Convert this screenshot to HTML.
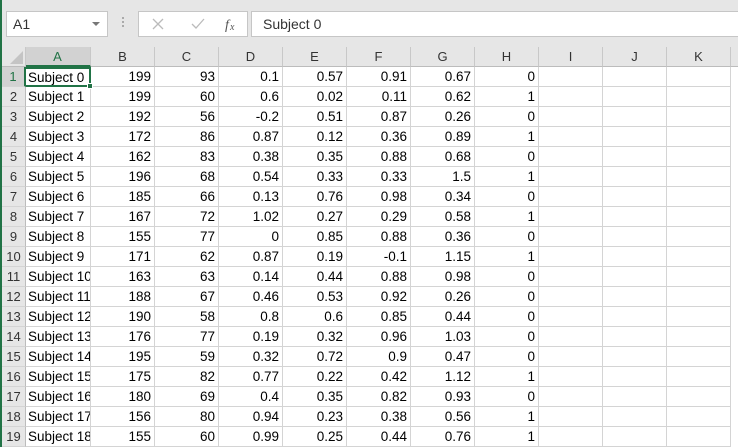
<!DOCTYPE html>
<html><head><meta charset="utf-8"><style>
*{margin:0;padding:0;box-sizing:border-box}
body{width:738px;height:447px;overflow:hidden;background:#fff;font-family:"Liberation Sans",Arial,sans-serif;position:relative}
.top{position:absolute;left:0;top:0;width:738px;height:47px;background:#e6e6e6;border-left:2px solid #217346}
.box{position:absolute;background:#fff;border:1px solid #c6c6c6;top:11px;height:26px}
.grid{position:absolute;left:0;top:47px;border-left:2px solid #217346}
.r{display:flex;height:20px}
.c{height:20px;border-right:1px solid #d4d4d4;border-bottom:1px solid #d4d4d4;font-size:13.5px;line-height:20px;white-space:nowrap;overflow:hidden;padding:0 3px;text-align:right;color:#000;flex:none;width:64px}
.c.a{width:65px;text-align:left;padding-left:2px}
.c.h{width:24px;background:#e6e6e6;color:#333;text-align:center;padding:0;border-right:1px solid #bcbcbc;border-bottom:1px solid #d4d4d4;font-size:13px}
.hd .c{background:#e6e6e6;text-align:center;color:#333;font-size:13px;border-right:1px solid #c8c8c8;border-bottom:1px solid #bcbcbc}
.hd .sel{background:#d2d2d2;color:#217346;border-bottom:2px solid #217346}
.c.hs{background:#d2d2d2;color:#217346;border-right:2px solid #217346}
</style></head><body>
<div class="top">
<div class="box" style="left:4px;width:102px"><span style="position:absolute;left:6px;top:4px;font-size:14px;color:#333">A1</span><span style="position:absolute;right:7px;top:10px;border:4px solid transparent;border-top:4px solid #777"></span></div>
<div style="position:absolute;left:120px;top:17px;width:2px;height:2px;background:#aaa;box-shadow:0 4px #aaa,0 8px #aaa"></div>
<div class="box" style="left:136px;width:110px">
<svg width="110" height="24" style="position:absolute;left:0;top:0"><path d="M14 7l10 10M24 7L14 17" stroke="#bbb" stroke-width="1.3" fill="none"/><path d="M53 12l4 4 8-9" stroke="#bbb" stroke-width="1.3" fill="none"/><text x="86" y="17" font-family="Liberation Serif" font-style="italic" font-size="14" fill="#555">f</text><text x="91" y="18" font-family="Liberation Serif" font-style="italic" font-size="10" fill="#555">x</text></svg></div>
<div class="box" style="left:249px;width:492px"><span style="position:absolute;left:11px;top:4px;font-size:14px;color:#333">Subject 0</span></div>
</div>
<div class="grid">
<div class="r hd"><div class="c h" style="position:relative"><svg width="24" height="20" style="position:absolute;left:0;top:0"><path d="M21 4V17H8z" fill="#c4c4c4"/></svg></div><div class="c a sel" style="text-align:center">A</div><div class="c">B</div><div class="c">C</div><div class="c">D</div><div class="c">E</div><div class="c">F</div><div class="c">G</div><div class="c">H</div><div class="c">I</div><div class="c">J</div><div class="c">K</div><div class="c"></div></div>
<div class="r"><div class="c h hs">1</div><div class="c a" style="border:2px solid #217346;border-left:0;line-height:18px;position:relative;overflow:visible">Subject 0<span style="position:absolute;right:-4px;bottom:-4px;width:6px;height:6px;background:#217346;border:1px solid #fff"></span></div><div class="c">199</div><div class="c">93</div><div class="c">0.1</div><div class="c">0.57</div><div class="c">0.91</div><div class="c">0.67</div><div class="c">0</div><div class="c"></div><div class="c"></div><div class="c"></div></div>
<div class="r"><div class="c h">2</div><div class="c a">Subject 1</div><div class="c">199</div><div class="c">60</div><div class="c">0.6</div><div class="c">0.02</div><div class="c">0.11</div><div class="c">0.62</div><div class="c">1</div><div class="c"></div><div class="c"></div><div class="c"></div></div>
<div class="r"><div class="c h">3</div><div class="c a">Subject 2</div><div class="c">192</div><div class="c">56</div><div class="c">-0.2</div><div class="c">0.51</div><div class="c">0.87</div><div class="c">0.26</div><div class="c">0</div><div class="c"></div><div class="c"></div><div class="c"></div></div>
<div class="r"><div class="c h">4</div><div class="c a">Subject 3</div><div class="c">172</div><div class="c">86</div><div class="c">0.87</div><div class="c">0.12</div><div class="c">0.36</div><div class="c">0.89</div><div class="c">1</div><div class="c"></div><div class="c"></div><div class="c"></div></div>
<div class="r"><div class="c h">5</div><div class="c a">Subject 4</div><div class="c">162</div><div class="c">83</div><div class="c">0.38</div><div class="c">0.35</div><div class="c">0.88</div><div class="c">0.68</div><div class="c">0</div><div class="c"></div><div class="c"></div><div class="c"></div></div>
<div class="r"><div class="c h">6</div><div class="c a">Subject 5</div><div class="c">196</div><div class="c">68</div><div class="c">0.54</div><div class="c">0.33</div><div class="c">0.33</div><div class="c">1.5</div><div class="c">1</div><div class="c"></div><div class="c"></div><div class="c"></div></div>
<div class="r"><div class="c h">7</div><div class="c a">Subject 6</div><div class="c">185</div><div class="c">66</div><div class="c">0.13</div><div class="c">0.76</div><div class="c">0.98</div><div class="c">0.34</div><div class="c">0</div><div class="c"></div><div class="c"></div><div class="c"></div></div>
<div class="r"><div class="c h">8</div><div class="c a">Subject 7</div><div class="c">167</div><div class="c">72</div><div class="c">1.02</div><div class="c">0.27</div><div class="c">0.29</div><div class="c">0.58</div><div class="c">1</div><div class="c"></div><div class="c"></div><div class="c"></div></div>
<div class="r"><div class="c h">9</div><div class="c a">Subject 8</div><div class="c">155</div><div class="c">77</div><div class="c">0</div><div class="c">0.85</div><div class="c">0.88</div><div class="c">0.36</div><div class="c">0</div><div class="c"></div><div class="c"></div><div class="c"></div></div>
<div class="r"><div class="c h">10</div><div class="c a">Subject 9</div><div class="c">171</div><div class="c">62</div><div class="c">0.87</div><div class="c">0.19</div><div class="c">-0.1</div><div class="c">1.15</div><div class="c">1</div><div class="c"></div><div class="c"></div><div class="c"></div></div>
<div class="r"><div class="c h">11</div><div class="c a">Subject 10</div><div class="c">163</div><div class="c">63</div><div class="c">0.14</div><div class="c">0.44</div><div class="c">0.88</div><div class="c">0.98</div><div class="c">0</div><div class="c"></div><div class="c"></div><div class="c"></div></div>
<div class="r"><div class="c h">12</div><div class="c a">Subject 11</div><div class="c">188</div><div class="c">67</div><div class="c">0.46</div><div class="c">0.53</div><div class="c">0.92</div><div class="c">0.26</div><div class="c">0</div><div class="c"></div><div class="c"></div><div class="c"></div></div>
<div class="r"><div class="c h">13</div><div class="c a">Subject 12</div><div class="c">190</div><div class="c">58</div><div class="c">0.8</div><div class="c">0.6</div><div class="c">0.85</div><div class="c">0.44</div><div class="c">0</div><div class="c"></div><div class="c"></div><div class="c"></div></div>
<div class="r"><div class="c h">14</div><div class="c a">Subject 13</div><div class="c">176</div><div class="c">77</div><div class="c">0.19</div><div class="c">0.32</div><div class="c">0.96</div><div class="c">1.03</div><div class="c">0</div><div class="c"></div><div class="c"></div><div class="c"></div></div>
<div class="r"><div class="c h">15</div><div class="c a">Subject 14</div><div class="c">195</div><div class="c">59</div><div class="c">0.32</div><div class="c">0.72</div><div class="c">0.9</div><div class="c">0.47</div><div class="c">0</div><div class="c"></div><div class="c"></div><div class="c"></div></div>
<div class="r"><div class="c h">16</div><div class="c a">Subject 15</div><div class="c">175</div><div class="c">82</div><div class="c">0.77</div><div class="c">0.22</div><div class="c">0.42</div><div class="c">1.12</div><div class="c">1</div><div class="c"></div><div class="c"></div><div class="c"></div></div>
<div class="r"><div class="c h">17</div><div class="c a">Subject 16</div><div class="c">180</div><div class="c">69</div><div class="c">0.4</div><div class="c">0.35</div><div class="c">0.82</div><div class="c">0.93</div><div class="c">0</div><div class="c"></div><div class="c"></div><div class="c"></div></div>
<div class="r"><div class="c h">18</div><div class="c a">Subject 17</div><div class="c">156</div><div class="c">80</div><div class="c">0.94</div><div class="c">0.23</div><div class="c">0.38</div><div class="c">0.56</div><div class="c">1</div><div class="c"></div><div class="c"></div><div class="c"></div></div>
<div class="r"><div class="c h">19</div><div class="c a">Subject 18</div><div class="c">155</div><div class="c">60</div><div class="c">0.99</div><div class="c">0.25</div><div class="c">0.44</div><div class="c">0.76</div><div class="c">1</div><div class="c"></div><div class="c"></div><div class="c"></div></div>
</div>
</body></html>
